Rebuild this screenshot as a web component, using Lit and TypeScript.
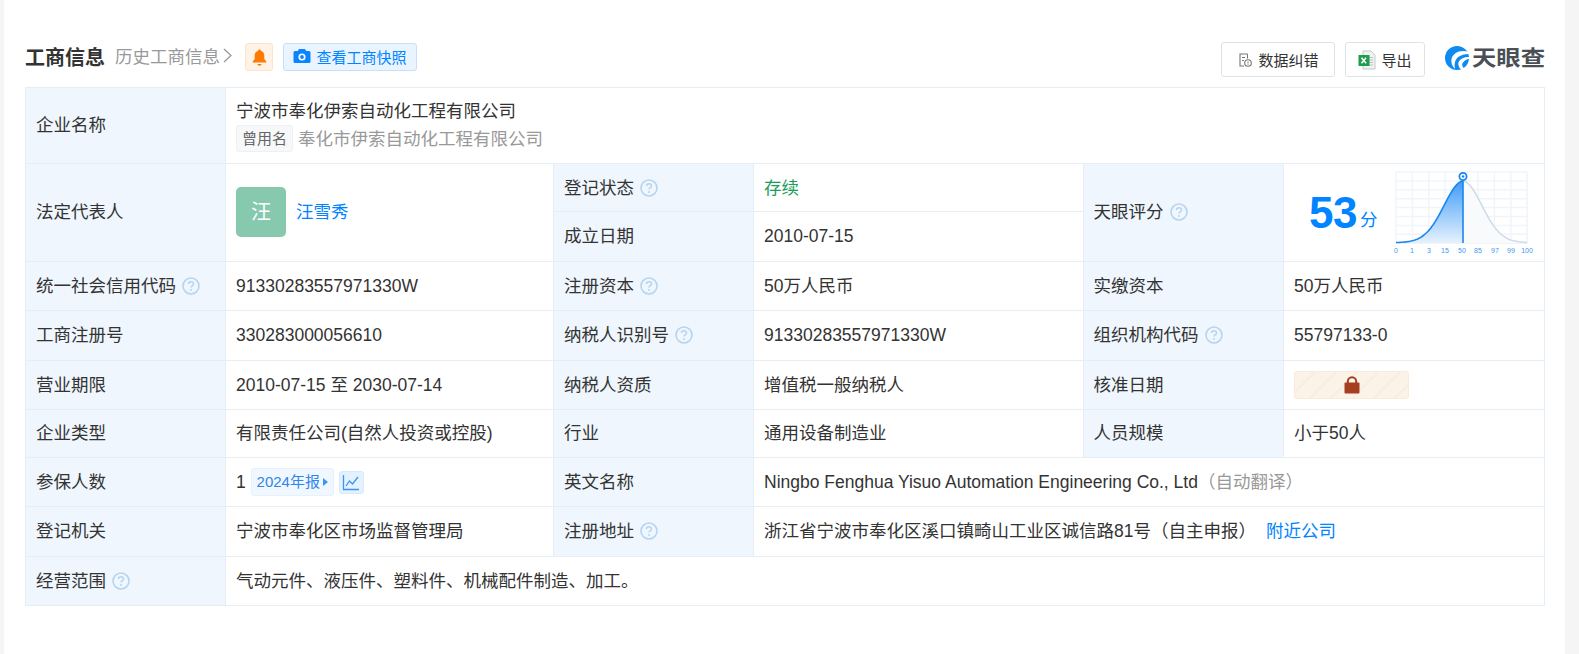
import { LitElement, html, css, svg } from "lit";
import { customElement } from "lit/decorators.js";

const help = html`<svg class="help" viewBox="0 0 18 18" aria-hidden="true"><circle cx="9" cy="9" r="8" fill="none" stroke="#b7d4ef" stroke-width="1.6"/><path d="M6.5 7.1c0-1.4 1-2.3 2.5-2.3s2.500.9 2.500 2.200c0 1.900-2.500 1.900-2.500 3.600" fill="none" stroke="#b7d4ef" stroke-width="1.5"/><circle cx="9" cy="13.100" r="1" fill="#b7d4ef"/></svg>`;

function bell(dx: number) {
  const g = Math.exp(-(dx * dx) / (2 * 19 * 19));
  const t = Math.exp(-Math.abs(dx) / 30);
  return 243 - 62 * (0.95 * g + 0.05 * t);
}
function curve(from: number, to: number) {
  const pts: string[] = [];
  for (let x = from; x <= to; x += 1) pts.push(`${x},${bell(x - 1463).toFixed(2)}`);
  return pts.join(" ");
}

@customElement("app-root")
export class AppRoot extends LitElement {
  static styles = css`
    :host { display: block; height: 654px; background: #f5f5f5; overflow: hidden;
      font-family: "Liberation Sans", "Noto Sans CJK SC", sans-serif; font-size: 17.5px; color: #333; }
    .card { margin-left: 4px; width: 1561px; height: 654px; background: #fff; box-sizing: border-box; padding: 42px 0 0 21px; }
    .head { display: flex; align-items: flex-start; height: 35px; width: 1519px; margin-bottom: 10px; }
    .left { display: flex; align-items: center; height: 28px; margin-top: 1px; }
    .title { font-size: 20px; font-weight: 700; color: #333; padding-bottom: 2px; }
    .hist { font-size: 17.5px; color: #999; margin-left: 10px; display: flex; align-items: center; padding-bottom: 3px; }
    .hist svg { width: 9px; height: 15px; margin-left: 3px; }
    .bellbox { width: 28px; height: 28px; box-sizing: border-box; margin-left: 13px; background: #fff3e8; border: 1px solid #ffe2c8; border-radius: 3px; display: flex; align-items: center; justify-content: center; }
    .bellbox svg { width: 15px; height: 17px; }
    .snap { height: 28px; width: 134px; box-sizing: border-box; margin-left: 10px; padding-bottom: 2px; background: #e9f4ff; border: 1px solid #c4e0fb; border-radius: 3px; color: #0084ff; font-size: 15px; display: flex; align-items: center; justify-content: center; gap: 5px; }
    .snap svg { width: 18px; height: 16px; }
    .spacer { flex: 1; }
    .btn { height: 35px; box-sizing: border-box; background: #fff; border: 1px solid #dfe3e6; border-radius: 3px; color: #333; font-size: 15px; display: flex; align-items: center; justify-content: center; gap: 5px; }
    .b1 { width: 114px; }
    .b2 { width: 80px; margin-left: 10px; }
    .logo { margin-left: 20px; display: flex; align-items: center; width: 99px; height: 35px; margin-top: -2px; }
    .logo svg { width: 24px; height: 24px; flex: none; margin-right: 3px; }
    .logo span { font-size: 21px; line-height: 24px; font-weight: 700; color: #4a4f55; white-space: nowrap; display: inline-block; transform: scaleX(1.16); transform-origin: left center; }
    table { border-collapse: collapse; table-layout: fixed; width: 1519px; }
    td { border: 1px solid #e5eef6; padding: 0 10px 1px; vertical-align: middle; line-height: 24px; box-sizing: border-box; white-space: nowrap; }
    td.l { background: #eff6fd; }
    td.flat { padding-bottom: 0; }
    .c1 { width: 200px; } .c2 { width: 328px; } .c3 { width: 200px; } .c4 { width: 329.500px; } .c5 { width: 200.500px; } .c6 { width: 261px; }
    .r48 { height: 48px; } .r49 { height: 49px; } .r50 { height: 50px; } .r76 { height: 76px; }
    .lab { display: flex; align-items: center; gap: 6px; }
    .help { width: 18px; height: 18px; flex: none; }
    .old { display: flex; align-items: center; margin-top: 2px; color: #999; }
    .oldtag { font-size: 15px; height: 25px; line-height: 25px; padding: 0 5px; background: #f7f8f9; border: 1px solid #eef0f2; border-radius: 3px; color: #666; margin-right: 5px; }
    .person { display: flex; align-items: center; gap: 10px; }
    .avatar { width: 50px; height: 50px; background: #87c9ae; border-radius: 5px; color: #fff; display: flex; align-items: center; justify-content: center; font-size: 20px; }
    .link { color: #0084ff; }
    .green { color: #1a9e5a; }
    .grey { color: #999; }
    .score { display: flex; align-items: flex-start; height: 97px; position: relative; }
    .num { font-size: 44px; font-weight: 700; color: #0084ff; line-height: 97px; margin-left: 15px; letter-spacing: -0.5px; }
    .fen { font-size: 17.5px; color: #0084ff; line-height: 24px; margin: 44px 0 0 3px; }
    .chart { position: absolute; left: 90px; top: 0; width: 150px; height: 97px; }
    .lock { width: 115px; height: 28px; background-color: #fcf3e8; background-image: repeating-linear-gradient(135deg, transparent 0 13px, #faecdf 13px 15px); border: 1px solid #fbeadb; border-radius: 3px; box-sizing: border-box; display: flex; align-items: center; justify-content: center; }
    .lock svg { width: 16px; height: 18px; }
    .ins { display: flex; align-items: center; }
    .tag { margin-left: 5px; height: 28px; width: 83px; box-sizing: border-box; background: #f0f7ff; border: 1px solid #e4f1fe; border-radius: 3px; color: #2d86ee; font-size: 15px; display: flex; align-items: center; justify-content: center; gap: 3px; }
    .tri { width: 0; height: 0; border-left: 5px solid #3d94f0; border-top: 4px solid transparent; border-bottom: 4px solid transparent; }
    .cbox { margin-left: 5px; width: 25px; height: 23px; box-sizing: border-box; background: #e4f1fe; border: 1px solid #d7e9fb; border-radius: 3px; display: flex; align-items: center; justify-content: center; }
    .cbox svg { width: 18px; height: 17px; }
    .nearby { margin-left: 10px; }
    .en { color: #333; }
  `;

  chart() {
    const vs: number[] = [];
    for (let i = 0; i <= 8; i++) vs.push(1396 + i * 16.4);
    const hs: number[] = [];
    for (let i = 0; i <= 8; i++) hs.push(172 + i * 8.9);
    const labs: [string, number][] = [["0", 1396], ["1", 1412], ["3", 1429], ["15", 1445], ["50", 1462], ["85", 1478], ["97", 1495], ["99", 1511], ["100", 1527]];
    return html`<svg class="chart" viewBox="1384 164 150 97" aria-hidden="true">
      <defs><linearGradient id="gr" x1="0" y1="0" x2="0" y2="1"><stop offset="0" stop-color="#409cf8"/><stop offset="1" stop-color="#e6f2fd"/></linearGradient></defs>
      ${vs.map((x) => svg`<line x1=${x} x2=${x} y1="172" y2="243" stroke="#f0f5fa" stroke-width="1.5"/>`)}
      ${hs.map((y) => svg`<line x1="1396" x2="1527" y1=${y} y2=${y} stroke="#f0f5fa" stroke-width="1.5"/>`)}
      <polygon points="1463,243 ${curve(1463, 1527)} 1527,243" fill="#f9fafc"/>
      <polyline points=${curve(1463, 1527)} fill="none" stroke="#cbdbe8" stroke-width="1.5"/>
      <polygon points="1396,243 ${curve(1396, 1463)} 1463,243" fill="url(#gr)"/>
      <polyline points=${curve(1396, 1463)} fill="none" stroke="#1a86f0" stroke-width="1.6"/>
      <line x1="1463" x2="1463" y1="178" y2="243" stroke="#1a86f0" stroke-width="1.6"/>
      <circle cx="1463" cy="176.500" r="3.600" fill="#fff" stroke="#1a86f0" stroke-width="1.800"/>
      <circle cx="1463" cy="176.500" r="1.200" fill="#1a86f0"/>
      ${labs.map(([t, x]) => svg`<text x=${x} y="252.500" text-anchor="middle" font-size="7" fill="#3f97f2" font-family="Liberation Sans">${t}</text>`)}
    </svg>`;
  }

  render() {
    return html`<div class="card">
      <div class="head">
        <div class="left">
          <span class="title">工商信息</span>
          <span class="hist">历史工商信息<svg viewBox="0 0 9 15"><path d="M1 1l7 6.500-7 6.500" fill="none" stroke="#999" stroke-width="1.300"/></svg></span>
          <span class="bellbox"><svg viewBox="0 0 15 17"><path d="M7.500 0.500c.8 0 1.300.5 1.300 1.200 2.300.6 3.500 2.500 3.500 5v3.300l2 2.500v1H.700v-1l2-2.500V6.700c0-2.500 1.200-4.400 3.500-5 0-.7.500-1.200 1.300-1.200zM5.500 15h4c0 1-.9 1.700-2 1.700s-2-.7-2-1.700z" fill="#ff7a00"/></svg></span>
          <span class="snap"><svg viewBox="0 0 18 16"><path d="M6 1h6l1.200 2H16a1.500 1.500 0 0 1 1.500 1.500v9A1.500 1.500 0 0 1 16 15H2a1.500 1.500 0 0 1-1.500-1.500v-9A1.500 1.500 0 0 1 2 3h2.800z" fill="#0a84ff"/><circle cx="9" cy="9" r="3.600" fill="#fff"/><circle cx="9" cy="9" r="1.900" fill="#0a84ff"/></svg>查看工商快照</span>
        </div>
        <span class="spacer"></span>
        <span class="btn b1"><svg width="16" height="16" viewBox="0 0 16 16"><path d="M10.500 2H3v12h4" fill="none" stroke="#777" stroke-width="1.100"/><path d="M10.500 2v4.500M5 5.500h3M5 8.500h2" stroke="#777" stroke-width="1"/><circle cx="11" cy="11" r="3.300" fill="none" stroke="#777" stroke-width="1.100"/><path d="M11 9.500v2M11 12.300v.6" stroke="#777"/></svg>数据纠错</span>
        <span class="btn b2"><svg width="18" height="20" viewBox="0 0 18 20"><path d="M5 1h8l4 4v14H5z" fill="#f1f3f3" stroke="#c3c9c9"/><path d="M11 7.500h4M11 10h4M11 12.500h4M11 15h4" stroke="#b8bfbf"/><rect x="0.500" y="5" width="11" height="11" fill="#1e9e4d"/><path d="M3.500 7.800l4.600 5.500M8.100 7.800l-4.600 5.500" stroke="#fff" stroke-width="1.500"/></svg>导出</span>
        <span class="logo"><svg viewBox="0 0 24 24"><circle cx="12" cy="12" r="12" fill="#0d8bf0"/><path d="M24 6C15 3 8 7 6.500 13c-.7 3.500.5 7 3.500 10-1-5 0-10 4-12.500C17 8.800 20 8 24 8z" fill="#fff"/><path d="M24 11c-5 0-9.500 2-10.500 5.500-.7 2.500.5 5.500 3.500 7.500l3-1c-3-2-3.500-4.500-2-6.500 1.500-2 4-3.500 6.500-3.500z" fill="#fff"/></svg><span>天眼查</span></span>
      </div>
      <table>
        <colgroup><col class="c1"/><col class="c2"/><col class="c3"/><col class="c4"/><col class="c5"/><col class="c6"/></colgroup>
        <tr class="r76"><td class="l">企业名称</td><td colspan="5" class="flat">宁波市奉化伊索自动化工程有限公司
          <div class="old"><span class="oldtag">曾用名</span>奉化市伊索自动化工程有限公司</div></td></tr>
        <tr class="r48"><td class="l" rowspan="2">法定代表人</td>
          <td rowspan="2"><div class="person"><span class="avatar">汪</span><span class="link">汪雪秀</span></div></td>
          <td class="l flat"><div class="lab">登记状态${help}</div></td><td class="green flat">存续</td>
          <td class="l" rowspan="2"><div class="lab">天眼评分${help}</div></td>
          <td rowspan="2" class="flat"><div class="score"><span class="num">53</span><span class="fen">分</span>${this.chart()}</div></td></tr>
        <tr class="r50"><td class="l">成立日期</td><td>2010-07-15</td></tr>
        <tr class="r49"><td class="l flat"><div class="lab">统一社会信用代码${help}</div></td><td class="flat">91330283557971330W</td>
          <td class="l flat"><div class="lab">注册资本${help}</div></td><td class="flat">50万人民币</td><td class="l flat">实缴资本</td><td class="flat">50万人民币</td></tr>
        <tr class="r50"><td class="l">工商注册号</td><td>330283000056610</td>
          <td class="l"><div class="lab">纳税人识别号${help}</div></td><td>91330283557971330W</td>
          <td class="l"><div class="lab">组织机构代码${help}</div></td><td>55797133-0</td></tr>
        <tr class="r49"><td class="l">营业期限</td><td>2010-07-15 至 2030-07-14</td>
          <td class="l">纳税人资质</td><td>增值税一般纳税人</td><td class="l">核准日期</td>
          <td class="flat"><div class="lock"><svg viewBox="0 0 16 18"><path d="M3.800 8V5.500a4.200 4.200 0 0 1 8.400 0V8" fill="none" stroke="#a63f20" stroke-width="2"/><path d="M1.500 6.500h13a1 1 0 0 1 1 1v9a1 1 0 0 1-1 1h-13a1 1 0 0 1-1-1v-9a1 1 0 0 1 1-1z" fill="#a63f20"/></svg></div></td></tr>
        <tr class="r48"><td class="l">企业类型</td><td>有限责任公司(自然人投资或控股)</td>
          <td class="l">行业</td><td>通用设备制造业</td><td class="l">人员规模</td><td>小于50人</td></tr>
        <tr class="r49"><td class="l flat">参保人数</td>
          <td class="flat"><div class="ins">1<span class="tag">2024年报<i class="tri"></i></span><span class="cbox"><svg viewBox="0 0 18 17"><path d="M1.500 1v14.500H17" fill="none" stroke="#3d94f0" stroke-width="1.300"/><path d="M4 12l3.500-5 3 3L16 3" fill="none" stroke="#3d94f0" stroke-width="1.300"/></svg></span></div></td>
          <td class="l flat">英文名称</td><td colspan="3" class="en flat">Ningbo Fenghua Yisuo Automation Engineering Co., Ltd<span class="grey">（自动翻译）</span></td></tr>
        <tr class="r50"><td class="l">登记机关</td><td>宁波市奉化区市场监督管理局</td>
          <td class="l"><div class="lab">注册地址${help}</div></td><td colspan="3">浙江省宁波市奉化区溪口镇畸山工业区诚信路81号（自主申报）<span class="link nearby">附近公司</span></td></tr>
        <tr class="r49"><td class="l flat"><div class="lab">经营范围${help}</div></td><td colspan="5" class="flat">气动元件、液压件、塑料件、机械配件制造、加工。</td></tr>
      </table>
    </div>`;
  }
}
